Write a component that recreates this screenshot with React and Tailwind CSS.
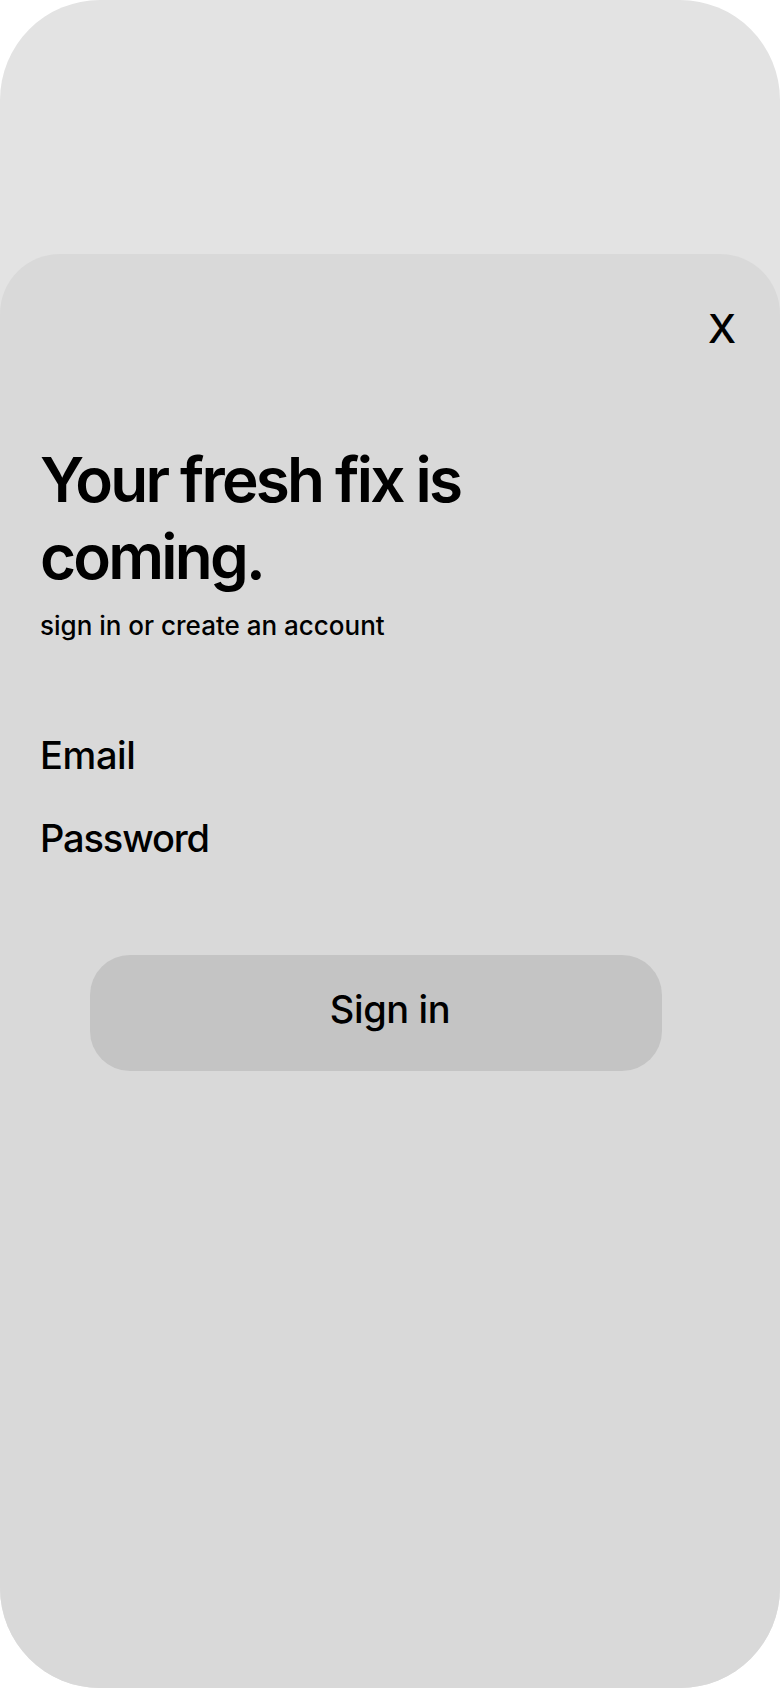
import React from 'react';

export default function App() {
  return (
    <div className="w-[780px] h-[1688px] bg-white" style={{ fontFamily: 'Inter, "Liberation Sans", sans-serif' }}>
      <div className="w-full h-full bg-[#e3e3e3] rounded-[100px] overflow-hidden flex flex-col">
        {/* top spacer behind the sheet */}
        <div className="h-[254px] shrink-0" />

        {/* sign-in sheet */}
        <div className="flex-1 bg-[#d9d9d9] rounded-t-[60px] px-[40px] pt-[51px] flex flex-col text-black">
          <div className="flex justify-end pr-[4px]">
            <button className="text-[40px] leading-[48px] font-medium">X</button>
          </div>

          <h1 className="mt-[88px] text-[62px] leading-[77px] font-semibold tracking-[-0.045em] w-[560px]">
            Your fresh fix is coming.
          </h1>
          <p className="mt-[16px] text-[26px] leading-[30px] font-medium">sign in or create an account</p>

          <label className="mt-[91px] text-[38px] leading-[46px] font-medium tracking-[-0.01em]">Email</label>
          <label className="mt-[37px] text-[38px] leading-[46px] font-medium tracking-[-0.03em]">Password</label>

          <button className="mt-[94px] ml-[50px] w-[572px] h-[116px] rounded-[40px] bg-[#c4c4c4] flex items-center justify-center pl-[28px] pb-[8px] text-[38px] leading-[46px] font-medium tracking-[-0.01em]">
            Sign in
          </button>
        </div>
      </div>
    </div>
  );
}
